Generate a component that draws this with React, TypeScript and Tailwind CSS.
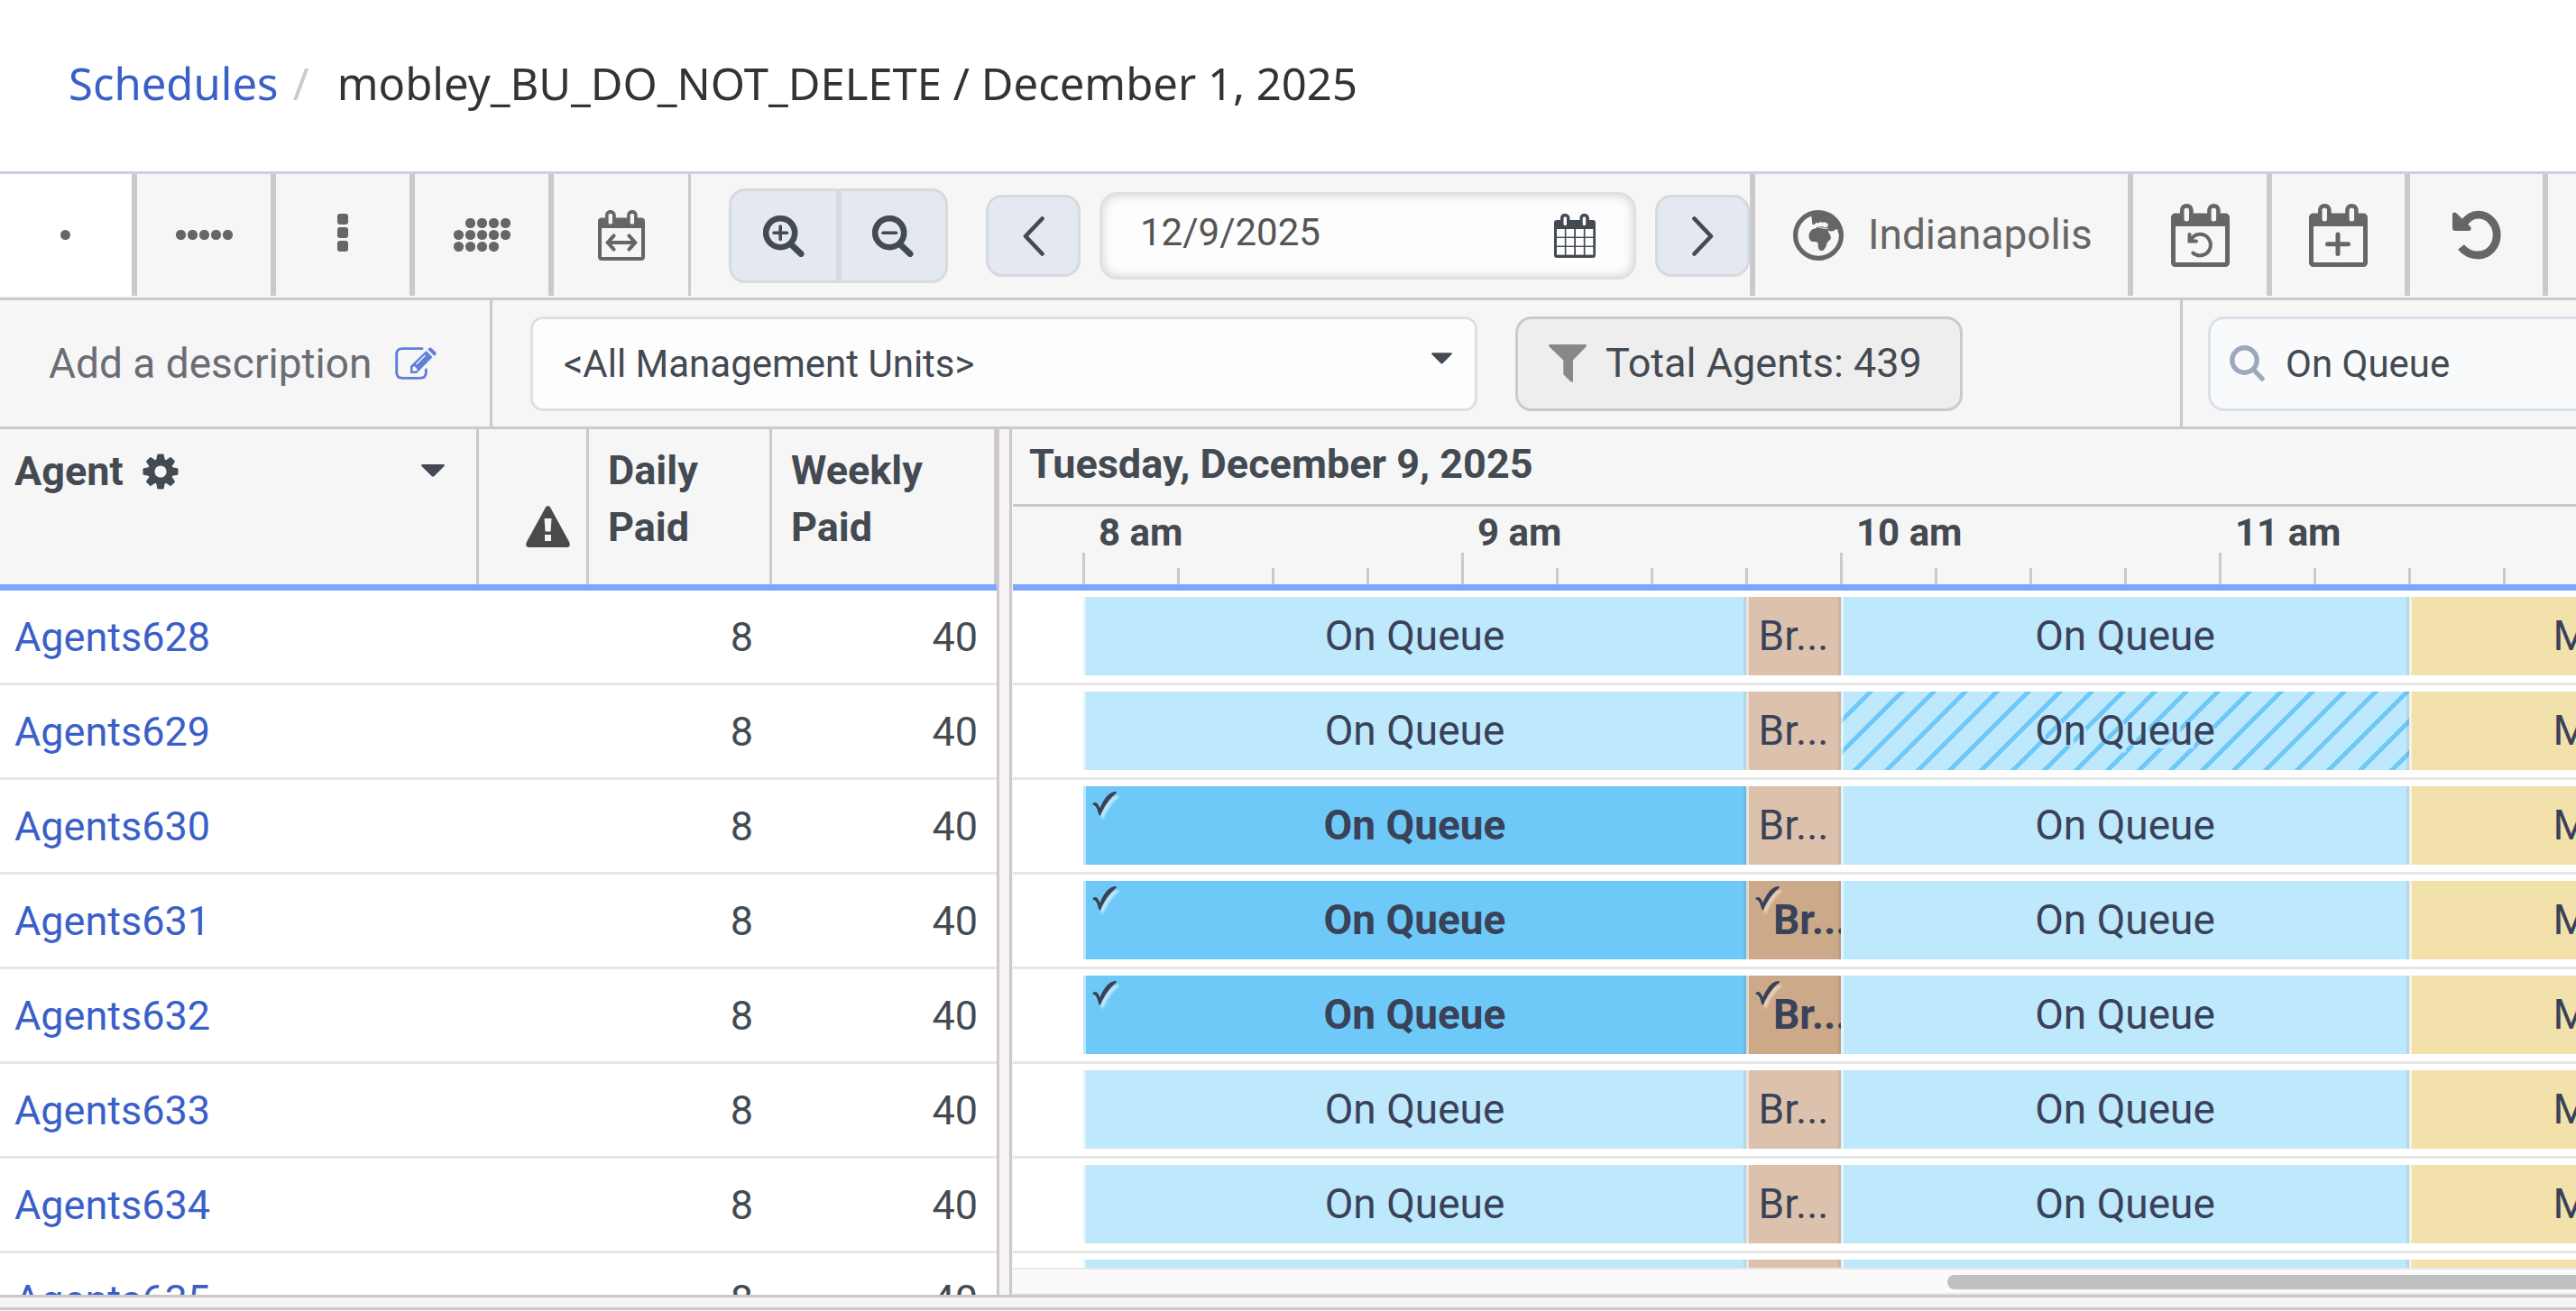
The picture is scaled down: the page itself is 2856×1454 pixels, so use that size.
import React from "react";
import clsx from "clsx";

type Kind = "queue" | "break" | "meal";

type Activity = {
  kind: Kind;
  label: string;
  minutes: number;
  checked?: boolean;
  hatched?: boolean;
};

type Agent = {
  name: string;
  daily: number;
  weekly: number;
  checks?: number;
  hatched?: boolean;
};

const PX_PER_MINUTE = 7;

const hours = ["8 am", "9 am", "10 am", "11 am"];

const agents: Agent[] = [
  { name: "Agents628", daily: 8, weekly: 40 },
  { name: "Agents629", daily: 8, weekly: 40, hatched: true },
  { name: "Agents630", daily: 8, weekly: 40, checks: 1 },
  { name: "Agents631", daily: 8, weekly: 40, checks: 2 },
  { name: "Agents632", daily: 8, weekly: 40, checks: 2 },
  { name: "Agents633", daily: 8, weekly: 40 },
  { name: "Agents634", daily: 8, weekly: 40 },
  { name: "Agents635", daily: 8, weekly: 40 },
];

function getActivities(agent: Agent): Activity[] {
  const checks = agent.checks ?? 0;
  return [
    { kind: "queue", label: "On Queue", minutes: 105, checked: checks > 0 },
    { kind: "break", label: "Br...", minutes: 15, checked: checks > 1 },
    { kind: "queue", label: "On Queue", minutes: 90, hatched: agent.hatched },
    { kind: "meal", label: "Meal", minutes: 60 },
  ];
}

/* ---------- icons ---------- */

function DotsIcon({ rows }: { rows: number[][] }) {
  const height = rows.length * 13 - 2;
  return (
    <svg width="63" height={height} viewBox={`0 0 63 ${height}`} fill="currentColor">
      {rows.map((cols, y) =>
        cols.map((x) => (
          <circle key={`${x}-${y}`} cx={x * 13 + 5.5} cy={y * 13 + 5.5} r="5.6" />
        ))
      )}
    </svg>
  );
}

function DayIcon() {
  return (
    <svg width="11" height="11" viewBox="0 0 11 11" fill="currentColor">
      <circle cx="5.5" cy="5.5" r="5.5" />
    </svg>
  );
}

function VerticalIcon() {
  return (
    <svg width="12" height="42" viewBox="0 0 12 42" fill="currentColor">
      <rect width="12" height="12" rx="3" />
      <rect y="15" width="12" height="12" rx="3" />
      <rect y="30" width="12" height="12" rx="3" />
    </svg>
  );
}

function CalendarFrame({
  className,
  children,
}: {
  className: string;
  children: React.ReactNode;
}) {
  return (
    <svg className={className} viewBox="0 0 65 70" fill="none">
      <path
        fill="currentColor"
        fillRule="evenodd"
        d="M5 10.5H10V7.5C10 3 13 0 17.3 0S24.7 3 24.7 7.5V10.5H40.2V7.5C40.2 3 43.2 0 47.4 0S54.7 3 54.7 7.5V10.5H60C63 10.5 65 12.5 65 15.5V65C65 68 63 70 60 70H5C2 70 0 68 0 65V15.5C0 12.5 2 10.5 5 10.5ZM5 25V65H60V25ZM14.5 6.5V17.5C14.5 20 20 20 20 17.5V6.5C20 4.3 14.5 4.3 14.5 6.5ZM44.6 6.5V17.5C44.6 20 50.1 20 50.1 17.5V6.5C50.1 4.3 44.6 4.3 44.6 6.5Z"
      />
      <g stroke="currentColor" strokeLinecap="round">
        {children}
      </g>
    </svg>
  );
}

function DateIcon() {
  return (
    <svg className="h-[49px] w-[46px]" viewBox="0 0 46 49" fill="currentColor">
      <path
        fillRule="evenodd"
        d="M3 7H7V5C7 2 9 0 12 0S17.5 2 17.5 5V7H28.5V5C28.5 2 30.5 0 33.5 0S39 2 39 5V7H43C45 7 46 8 46 10V46C46 48 45 49 43 49H3C1 49 0 48 0 46V10C0 8 1 7 3 7ZM10.5 4.5V11.5C10.5 13.5 14 13.5 14 11.5V4.5C14 3 10.5 3 10.5 4.5ZM31.7 4.5V11.5C31.7 13.5 35.2 13.5 35.2 11.5V4.5C35.2 3 31.7 3 31.7 4.5Z"
      />
      <g fill="#fdfdfd">
        {[3, 13.4, 24, 34.5].map((x) =>
          [17, 27, 37].map((y) => (
            <rect key={`${x}-${y}`} x={x} y={y} width="8.8" height="8.6" />
          ))
        )}
      </g>
    </svg>
  );
}

function MagnifierIcon({ plus }: { plus?: boolean }) {
  return (
    <svg
      className="h-[46px] w-[46px]"
      viewBox="0 0 46 46"
      fill="none"
      stroke="currentColor"
      strokeLinecap="round"
    >
      <circle cx="19.2" cy="19.2" r="16" strokeWidth="6.6" />
      <path d="M32 33L42 42.5" strokeWidth="7" />
      <path d={plus ? "M12 19.2H26.5M19.2 12V26.5" : "M12 19.2H26.5"} strokeWidth="3.6" />
    </svg>
  );
}

function SearchIcon() {
  return (
    <svg
      className="h-10 w-[39px] shrink-0 text-[#9ca8bb]"
      viewBox="0 0 39 40"
      fill="none"
      stroke="currentColor"
      strokeLinecap="round"
    >
      <circle cx="16.5" cy="16.5" r="13.7" strokeWidth="5.4" />
      <path d="M28 28.5L36 37" strokeWidth="5.4" />
    </svg>
  );
}

function ChevronIcon({ next }: { next?: boolean }) {
  return (
    <svg
      className="h-11 w-6"
      viewBox="0 0 24 44"
      fill="none"
      stroke="currentColor"
      strokeWidth="4.6"
      strokeLinecap="round"
      strokeLinejoin="round"
    >
      <path d={next ? "M2.5 2.5L21 22L2.5 41.5" : "M21.5 2.5L3 22L21.5 41.5"} />
    </svg>
  );
}

function GlobeIcon() {
  return (
    <svg className="size-14" viewBox="0 0 56 56" fill="currentColor">
      <circle cx="28" cy="28" r="25.4" fill="none" stroke="currentColor" strokeWidth="5.2" />
      <path d="M20 6C20 6 21 10 21.3 15C22 17.5 23.5 16 25 14.5C27 13 27.5 15.5 29 13.8C30.5 12.5 32 14.5 34 13.6C37 13.2 38.5 14.8 38.8 16.5C39 18.5 37 19.5 34.5 19C31.5 18 30 18.5 28 18.3C26 18.5 25.5 19.5 24.5 20.5C21.5 21 20 22 18.8 24.3C17.8 26 17.5 26.5 17.6 29.5C17.8 33 19.5 35 22.5 35C26 34.5 27.6 35.5 27.6 38C27.6 41 28.5 43.5 29 44C30.5 45.5 33 45.5 34.5 43.5C36.5 41 37 39.5 37.2 37.5C38 35 41 33.5 42 31.5C42 30 41 29.5 41.5 28C40.5 26 39 25 38.5 22.5C41 23.5 44 24 45.5 22.5C47 21.3 49 20.5 49.5 22C49.5 24 50 26 51 26L54 24L50 13L39 4L28 2Z" />
      <path
        d="M22.5 20C26 17.8 29.5 19 32.5 20C35 20.8 37 19.8 38.8 20.3"
        fill="none"
        stroke="#f6f6f6"
        strokeWidth="1"
      />
    </svg>
  );
}

function UndoIcon() {
  return (
    <svg className="h-[56px] w-[54px]" viewBox="0 0 54 56" fill="none">
      <path
        d="M12 15.5C17 8.5 22 5.2 28.5 5.2C40 5.2 49.2 15 49.2 27.5C49.2 40 40 50 28.5 50C20.5 50 14 46.5 9.5 41"
        stroke="currentColor"
        strokeWidth="8.8"
      />
      <path
        d="M0 5C0 2 3 1.8 4.5 3.5L20 18.5C21.5 20.5 20.5 23 18 23H3C1 23 0 22 0 20Z"
        fill="currentColor"
      />
    </svg>
  );
}

function EditIcon() {
  return (
    <svg className="h-9 w-[46px]" viewBox="0 0 46 36" fill="none">
      <path
        d="M30 1.7H8C4 1.7 1.7 4 1.7 8V28C1.7 32 4 34.3 8 34.3H28C32 34.3 34.3 32 34.3 28V25"
        stroke="currentColor"
        strokeWidth="2.8"
        strokeLinecap="round"
      />
      <path
        fill="currentColor"
        fillRule="evenodd"
        d="M17 29V21L34.5 4L41.5 11L24 29ZM19.5 22.5V26.5H23.5L25 25L21.5 21ZM24 19.5L34 9.5L33 8.5L23 18.5Z"
      />
      <path fill="currentColor" d="M36.3 2.5L37.5 1.2Q39 0 40.5 1.2L45 5.5Q46.2 7 45 8.5L43.500 9.7Z" />
    </svg>
  );
}

function FilterIcon() {
  return (
    <svg className="size-[42px] text-[#888]" viewBox="0 0 42 42" fill="currentColor">
      <path d="M1.5 0H40.5C42 0 42.3 1.5 41.5 2.5L27 17.5V40C27 42 25.5 42.3 24.5 41.2L17 34C16.5 33.4 16.3 33 16.3 32V17.5L.5 2.5C-.3 1.5 0 0 1.5 0Z" />
    </svg>
  );
}

function GearIcon() {
  return (
    <svg className="size-10" viewBox="0 0 40 40">
      <g fill="currentColor">
        {[0, 45, 90, 135].map((angle) => (
          <path
            key={angle}
            transform={`rotate(${angle} 20 20)`}
            d="M17.5 .5H22.5Q23.5 .5 23.7 1.5L25 8V32L23.7 38.5Q23.5 39.5 22.5 39.5H17.5Q16.5 39.5 16.3 38.5L15 32V8L16.3 1.5Q16.5 .5 17.5 .5Z"
          />
        ))}
        <circle cx="20" cy="20" r="14" />
      </g>
      <circle cx="20" cy="20" r="6.6" fill="#f6f6f6" />
    </svg>
  );
}

function CaretIcon({ className }: { className: string }) {
  return (
    <svg className={className} viewBox="0 0 26 14" fill="currentColor">
      <path d="M1.5 0H24.5Q26.5 .3 25.5 2L14.5 13Q13 14.5 11.5 13L.5 2Q-.5 .3 1.5 0Z" />
    </svg>
  );
}

function WarningIcon() {
  return (
    <svg className="h-[46px] w-[49px] text-[#4a4a4a]" viewBox="0 0 49 46">
      <path
        fill="currentColor"
        d="M22 1.5Q24.5 -1.5 27 1.5L48.3 40.5Q50 45.5 45.5 46H3.5Q-1 45.5 .7 40.5Z"
      />
      <path fill="#f6f6f6" d="M20.5 14H28.5L27.5 28.5H21.5ZM21 32H28V39H21Z" />
    </svg>
  );
}

function CheckIcon({ kind }: { kind: Kind }) {
  return (
    <svg
      className={clsx(
        "mt-[6px] ml-[10px] h-[27px] w-7 shrink-0 overflow-visible",
        kind === "queue"
          ? "drop-shadow-[3px_4px_1px_#bee8fc]"
          : "drop-shadow-[3px_4px_1px_#eaceb8]"
      )}
      viewBox="0 0 28 27"
      fill="currentColor"
    >
      <path d="M.5 14.5C0 12 4 11 5.5 13C7 14.5 7.5 16 8.5 18C12 9.5 17.5 1 24 .2C26.5 -.2 28 .8 26 2.2C19 7.5 13 17 9.5 25.5C9 27 7.8 27 7.3 25.5C5.5 20 4.5 15.5 .5 14.5Z" />
    </svg>
  );
}

/* ---------- page parts ---------- */

function Breadcrumbs() {
  return (
    <header className="flex h-[190px] shrink-0 items-center bg-white pb-1 pl-[76px] font-['Noto_Sans',sans-serif] text-[49px] whitespace-nowrap text-[#333]">
      <a href="#schedules" className="text-[#3a60c8]">
        Schedules
      </a>
      <span className="ml-4 text-[#ccc]">/</span>
      <h1 className="ml-[31px]">mobley_BU_DO_NOT_DELETE / December 1, 2025</h1>
    </header>
  );
}

function ToolButton({
  label,
  className,
  children,
}: {
  label: string;
  className?: string;
  children: React.ReactNode;
}) {
  return (
    <button
      aria-label={label}
      className={clsx(
        "flex h-[135px] shrink-0 items-center justify-center self-start border-[#cacaca]",
        className
      )}
    >
      {children}
    </button>
  );
}

function StepButton({ label, children }: { label: string; children: React.ReactNode }) {
  return (
    <button
      aria-label={label}
      className="flex h-[91px] w-[105px] shrink-0 items-center justify-center rounded-[18px] border-3 border-[#d6dbe0] bg-[#e4e8f1] text-[#444a52]"
    >
      {children}
    </button>
  );
}

function Toolbar() {
  return (
    <div className="flex h-[143px] shrink-0 items-center border-y-3 border-t-[#c9d1e3] border-b-[#cacaca] text-[#666]">
      <ToolButton label="Day" className="w-[152px] border-r-6 bg-white pr-[2px]">
        <DayIcon />
      </ToolButton>
      <ToolButton label="Week" className="w-[154px] border-r-6">
        <DotsIcon rows={[[0, 1, 2, 3, 4]]} />
      </ToolButton>
      <ToolButton label="Agent by day" className="w-[154px] border-r-6 pb-[5px]">
        <VerticalIcon />
      </ToolButton>
      <ToolButton label="Month" className="w-[154px] border-r-6">
        <DotsIcon
          rows={[
            [1, 2, 3, 4],
            [0, 1, 2, 3, 4],
            [0, 1, 2, 3],
          ]}
        />
      </ToolButton>
      <ToolButton label="Date range" className="w-[152px] border-r-3">
        <CalendarFrame className="h-14 w-[52px]">
          <path d="M14 45H51M22 35.5L13.5 45L22 54.5M43 35.5L51.5 45L43 54.5" strokeWidth="5" />
        </CalendarFrame>
      </ToolButton>

      <div className="ml-[42px] flex h-[105px] w-[243px] shrink-0 overflow-hidden rounded-[18px] border-3 border-[#d6dbe0] bg-[#e4e8f1] text-[#444a52]">
        <button
          aria-label="Zoom in"
          className="flex flex-1 items-center justify-center border-r-3 border-[#d6dbe0]"
        >
          <MagnifierIcon plus />
        </button>
        <button
          aria-label="Zoom out"
          className="flex flex-1 items-center justify-center border-l-3 border-[#d6dbe0]"
        >
          <MagnifierIcon />
        </button>
      </div>

      <div className="ml-[42px] flex shrink-0 items-center gap-[21px]">
        <StepButton label="Previous day">
          <ChevronIcon />
        </StepButton>
        <div className="flex h-[97px] w-[595px] items-center rounded-[20px] border-3 border-[#dbe1e8] bg-[#fdfdfd] pr-[42px] pl-[42px] shadow-[inset_0_0_12px_rgba(0,0,0,0.18)]">
          <input
            aria-label="Schedule date"
            defaultValue="12/9/2025"
            className="min-w-0 flex-1 bg-transparent pb-[8px] text-[42px] text-[#555] outline-none"
          />
          <button aria-label="Open calendar" className="text-[#444a52]">
            <DateIcon />
          </button>
        </div>
        <StepButton label="Next day">
          <ChevronIcon next />
        </StepButton>
      </div>

      <button className="flex h-[135px] w-[419px] shrink-0 items-center gap-[27px] self-start border-l-6 border-[#cacaca] pl-[42px] text-[46px]">
        <GlobeIcon />
        Indianapolis
      </button>
      <ToolButton label="Revert day" className="w-[154px] border-l-6">
        <CalendarFrame className="h-[70px] w-[65px]">
          <path d="M20.5 34V41.5H28M21.5 41C24 36 27 33.8 32 33.8A11.8 11.8 0 1 1 24.3 54.5" strokeWidth="4" />
        </CalendarFrame>
      </ToolButton>
      <ToolButton label="Add activity" className="w-[153px] border-l-6">
        <CalendarFrame className="h-[70px] w-[65px]">
          <path d="M20.5 44.7H43.5M32 34V55.5" strokeWidth="5" />
        </CalendarFrame>
      </ToolButton>
      <ToolButton label="Undo" className="w-[153px] border-l-6">
        <UndoIcon />
      </ToolButton>
      <div className="h-[135px] flex-1 self-start border-l-6 border-[#cacaca]" />
    </div>
  );
}

function FilterBar() {
  return (
    <div className="flex h-[143px] shrink-0 items-center border-b-3 border-[#cacaca] text-[#444a52]">
      <button className="flex h-full w-[546px] shrink-0 items-center gap-[26px] border-r-3 border-[#cacaca] pl-[54px] text-[46px] text-[#6b6d75]">
        Add a description
        <span className="text-[#5f7fd6]">
          <EditIcon />
        </span>
      </button>
      <div className="relative ml-[42px] h-[105px] w-[1050px] shrink-0">
        <select
          aria-label="Management unit"
          className="size-full appearance-none rounded-[14px] border-3 border-[#dbe1e8] bg-[#fdfdfd] pl-[34px] text-[42px]"
        >
          <option>&lt;All Management Units&gt;</option>
        </select>
        <CaretIcon className="pointer-events-none absolute top-10 right-7 h-[13px] w-[23px]" />
      </div>
      <button className="ml-[42px] flex h-[105px] w-[496px] shrink-0 items-center gap-[21px] rounded-[18px] border-3 border-[#cacaca] bg-[#eee] pl-[34px] text-[45px] whitespace-nowrap">
        <FilterIcon />
        Total Agents: 439
      </button>
      <div className="flex-1" />
      <div className="flex h-full w-[439px] shrink-0 items-center overflow-hidden border-l-3 border-[#cacaca] pl-7">
        <div className="flex h-[105px] w-[640px] shrink-0 items-center gap-[23px] rounded-[18px] border-3 border-[#dbe1e8] bg-[#f9fafc] pl-[21px]">
          <SearchIcon />
          <input
            aria-label="Search activities"
            defaultValue="On Queue"
            className="min-w-0 flex-1 bg-transparent text-[42px] outline-none"
          />
        </div>
      </div>
    </div>
  );
}

function AgentTable() {
  return (
    <div className="w-[1105px] shrink-0 overflow-hidden bg-white">
      <table className="w-full table-fixed border-separate border-spacing-0 text-[45px] leading-[63px] text-[#444a52]">
        <colgroup>
          <col className="w-[531px]" />
          <col className="w-[122px]" />
          <col className="w-[203px]" />
          <col />
        </colgroup>
        <thead className="bg-[#f6f6f6] text-left">
          <tr>
            <th className="border-b-7 border-[#80a5ff] p-0">
              <div className="flex h-[172px] items-start border-r-3 border-[#cacaca] pt-[15px] pr-[35px] pl-4">
                <span>Agent</span>
                <button aria-label="Column settings" className="mt-3 ml-[21px]">
                  <GearIcon />
                </button>
                <button aria-label="Sort agents" className="mt-6 ml-auto">
                  <CaretIcon className="h-[14px] w-[26px]" />
                </button>
              </div>
            </th>
            <th className="border-b-7 border-[#80a5ff] p-0" aria-label="Warnings">
              <div className="flex h-[172px] items-end justify-end border-r-3 border-[#cacaca] pr-[18px] pb-[41px]">
                <WarningIcon />
              </div>
            </th>
            <th className="border-b-7 border-[#80a5ff] p-0">
              <div className="h-[172px] border-r-3 border-[#cacaca] pt-[14px] pl-[21px]">
                Daily
                <br />
                Paid
              </div>
            </th>
            <th className="border-b-7 border-[#80a5ff] p-0">
              <div className="h-[172px] border-r-3 border-[#cacaca] pt-[14px] pl-[21px]">
                Weekly
                <br />
                Paid
              </div>
            </th>
          </tr>
        </thead>
        <tbody>
          {agents.map((agent) => (
            <tr key={agent.name}>
              <td className="h-[105px] border-b-3 border-[#e6e6e6] p-0 pl-4">
                <a href="#agent" className="text-[#3a60c8]">
                  {agent.name}
                </a>
              </td>
              <td className="border-b-3 border-[#e6e6e6] p-0" />
              <td className="border-b-3 border-[#e6e6e6] p-0 pr-[21px] text-right">
                {agent.daily}
              </td>
              <td className="border-b-3 border-[#e6e6e6] p-0 pr-[21px] text-right">
                {agent.weekly}
              </td>
            </tr>
          ))}
        </tbody>
      </table>
    </div>
  );
}

function ActivityBar({ activity }: { activity: Activity }) {
  const { kind, label, minutes, checked, hatched } = activity;
  return (
    <div
      style={{ width: minutes * PX_PER_MINUTE }}
      className={clsx(
        "grid h-[87px] shrink-0 items-center overflow-hidden shadow-[inset_3px_0_0_rgba(255,255,255,0.55),inset_-3px_0_1px_rgba(0,0,0,0.07)]",
        checked
          ? "grid-cols-[minmax(30px,1fr)_auto_1fr] font-bold"
          : "grid-cols-[1fr_auto_1fr]",
        kind === "queue" && (checked ? "bg-[#6fc9f8]" : "bg-[#bee8fc]"),
        kind === "break" && (checked ? "bg-[#cca988]" : "bg-[#dcc2ac]"),
        kind === "meal" && "bg-[#f3e1ac]",
        hatched &&
          "bg-[linear-gradient(135deg,#6fc9f8_0_2%,transparent_2%_42%,#6fc9f8_42%_52%,transparent_52%_92%,#6fc9f8_92%)] bg-size-[35px_35px] [text-shadow:4px_4px_1px_#bee8fc]"
      )}
    >
      <div className="w-0 self-start">{checked && <CheckIcon kind={kind} />}</div>
      <span>{label}</span>
    </div>
  );
}

function Timeline() {
  return (
    <div className="ml-px flex min-w-0 flex-1 flex-col overflow-hidden">
      <div className="flex h-[86px] shrink-0 items-center border-b-3 border-[#cacaca] pb-[6px] pl-[18px] text-[45px] font-bold text-[#444a52]">
        Tuesday, December 9, 2025
      </div>
      <div className="flex h-[93px] shrink-0 border-b-7 border-[#80a5ff] pl-[77px]">
        {hours.map((hour) => (
          <div key={hour} className="flex w-[420px] shrink-0 flex-col justify-between">
            <div className="pt-[6px] pl-[18px] text-[42px] leading-[45px] font-bold text-[#444a52]">
              {hour}
            </div>
            <div className="flex items-end">
              <div className="h-[35px] w-[105px] border-l-3 border-[#cacaca]" />
              <div className="h-[18px] w-[105px] border-l-3 border-[#cacaca]" />
              <div className="h-[18px] w-[105px] border-l-3 border-[#cacaca]" />
              <div className="h-[18px] w-[105px] border-l-3 border-[#cacaca]" />
            </div>
          </div>
        ))}
      </div>
      <div className="min-h-0 flex-1 overflow-hidden bg-white">
        {agents.map((agent) => (
          <div
            key={agent.name}
            className="flex h-[105px] border-b-3 border-[#e6e6e6] pt-[7px] pl-[78px] text-[46px] text-[#394259]"
          >
            {getActivities(agent).map((activity, i) => (
              <ActivityBar key={i} activity={activity} />
            ))}
          </div>
        ))}
      </div>
      <div className="h-[30px] shrink-0 overflow-hidden border-y-2 border-[#e8e8e8] bg-[#fafafa] pt-[6px]">
        <div className="ml-[1036px] h-4 w-[1200px] rounded-full bg-[#c0c0c0]" />
      </div>
    </div>
  );
}

export default function App() {
  return (
    <div className="flex h-screen flex-col overflow-hidden bg-[#f6f6f6] font-[Roboto,sans-serif]">
      <Breadcrumbs />
      <Toolbar />
      <FilterBar />
      <main className="flex min-h-0 flex-1">
        <AgentTable />
        <div className="w-[17px] shrink-0 border-x-3 border-[#cacaca] bg-[#f7f2f6]" />
        <Timeline />
      </main>
      <div className="mb-px h-[17px] shrink-0 border-y-3 border-[#c8c8c8] bg-[#f7f2f6]" />
    </div>
  );
}
